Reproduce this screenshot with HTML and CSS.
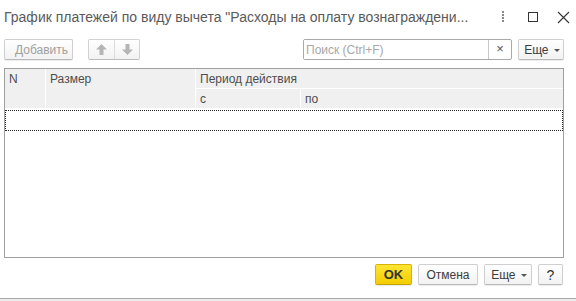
FILE: index.html
```html
<!DOCTYPE html>
<html lang="ru">
<head>
    <meta charset="UTF-8">
    <title>График платежей</title>
    <link rel="stylesheet" href="styles.css">
</head>
<body>
    <div class="window">
        <div class="titlebar">
            <h1 class="title">График платежей по виду вычета "Расходы на оплату вознаграждени...</h1>
            <div class="win-controls">
                <span class="win-btn">
                    <svg width="4" height="14" viewBox="0 0 4 14">
                        <rect x="1" y="1" width="2" height="2" fill="#8a8a8a"/>
                        <rect x="1" y="4" width="2" height="2" fill="#8a8a8a"/>
                        <rect x="1" y="7" width="2" height="2" fill="#8a8a8a"/>
                        <rect x="1" y="10" width="2" height="2" fill="#8a8a8a"/>
                    </svg>
                </span>
                <span class="win-btn">
                    <svg width="12" height="12" viewBox="0 0 12 12">
                        <rect x="1.5" y="1.5" width="9" height="9" fill="none" stroke="#333" stroke-width="1"/>
                    </svg>
                </span>
                <span class="win-btn">
                    <svg width="13" height="13" viewBox="0 0 13 13">
                        <path d="M1 1 L12 12 M12 1 L1 12" stroke="#333" stroke-width="1.1"/>
                    </svg>
                </span>
            </div>
        </div>

        <div class="toolbar">
            <button class="btn btn-add" disabled>Добавить</button>
            <div class="btn-group">
                <button class="btn-arrow" disabled>
                    <svg width="11" height="11" viewBox="0 0 11 11">
                        <path d="M5.5 0 L11 5.5 L7.5 5.5 L7.5 11 L3.5 11 L3.5 5.5 L0 5.5 Z" fill="#b5b5b5"/>
                    </svg>
                </button>
                <button class="btn-arrow" disabled>
                    <svg width="11" height="11" viewBox="0 0 11 11">
                        <path d="M5.5 11 L11 5.5 L7.5 5.5 L7.5 0 L3.5 0 L3.5 5.5 L0 5.5 Z" fill="#b5b5b5"/>
                    </svg>
                </button>
            </div>
            <div class="spacer"></div>
            <div class="search">
                <input class="search-input" type="text" placeholder="Поиск (Ctrl+F)">
                <span class="search-clear">×</span>
            </div>
            <button class="btn btn-more">Еще <span class="caret"></span></button>
        </div>

        <div class="grid">
            <div class="grid-head">
                <div class="cell cell-n">N</div>
                <div class="cell cell-size">Размер</div>
                <div class="cell cell-period">Период действия</div>
                <div class="cell cell-from">с</div>
                <div class="cell cell-to">по</div>
            </div>
            <div class="grid-row current"></div>
        </div>

        <div class="form-buttons">
            <button class="btn btn-ok">OK</button>
            <button class="btn btn-cancel">Отмена</button>
            <button class="btn btn-more">Еще <span class="caret"></span></button>
            <button class="btn btn-help">?</button>
        </div>

        <div class="statusbar"></div>
    </div>
</body>
</html>
```

FILE: styles.css
```css
body {
    margin: 0;
    font-family: "Liberation Sans", Arial, sans-serif;
    font-size: 12px;
    color: #4a4a4a;
    background: #fff;
}
.window {
    width: 576px;
    height: 301px;
    display: flex;
    flex-direction: column;
    overflow: hidden;
}
.titlebar {
    display: flex;
    align-items: flex-start;
    height: 39px;
    padding-left: 4px;
    padding-right: 3px;
}
.title {
    margin: 9px 0 0 0;
    font-size: 14px;
    font-weight: normal;
    line-height: 17px;
    color: #5a5a5a;
    white-space: nowrap;
    overflow: hidden;
    flex: 1;
    min-width: 0;
}
.win-controls {
    display: flex;
    align-items: center;
    gap: 10px;
    margin-top: 9px;
}
.win-btn {
    display: flex;
    align-items: center;
    justify-content: center;
    width: 20px;
    height: 16px;
}

/* панель команд */
.toolbar {
    display: flex;
    align-items: center;
    height: 21px;
    padding: 0 12px 0 4px;
}
.btn {
    height: 21px;
    padding: 0 10px;
    font-family: "Liberation Sans", Arial, sans-serif;
    font-size: 12px;
    color: #3c3c3c;
    background: linear-gradient(to bottom, #ffffff, #f2f2f2);
    border: 1px solid #cfcfcf;
    border-bottom-color: #b9b9b9;
    border-radius: 2px;
    box-shadow: 0 1px 1px rgba(0, 0, 0, 0.08);
    cursor: pointer;
}
.btn-add {
    width: 69px;
    color: #a0a0a0;
}
.btn-group {
    display: flex;
    margin-left: 15px;
    border: 1px solid #d2d2d2;
    border-bottom-color: #bdbdbd;
    border-radius: 2px;
    background: linear-gradient(to bottom, #ffffff, #f2f2f2);
}
.btn-arrow {
    width: 25px;
    height: 19px;
    padding: 0;
    border: none;
    background: none;
    display: flex;
    align-items: center;
    justify-content: center;
}
.btn-arrow + .btn-arrow {
    border-left: 1px solid #dcdcdc;
}
.spacer {
    flex: 1;
}
.search {
    display: flex;
    width: 207px;
    height: 19px;
    border: 1px solid #a9a9a9;
    border-radius: 2px;
    background: #fff;
}
.search-input {
    flex: 1;
    min-width: 0;
    border: none;
    outline: none;
    padding: 0 2px;
    font-family: "Liberation Sans", Arial, sans-serif;
    font-size: 12px;
    color: #333;
}
.search-input::placeholder {
    color: #a8a8a8;
}
.search-clear {
    width: 22px;
    border-left: 1px solid #c8c8c8;
    text-align: center;
    line-height: 18px;
    font-size: 13px;
    color: #555;
}
.btn-more {
    width: 46px;
    margin-left: 6px;
    padding: 0 0 0 2px;
}
.caret {
    display: inline-block;
    margin-left: 2px;
    vertical-align: middle;
    border-left: 3px solid transparent;
    border-right: 3px solid transparent;
    border-top: 3px solid #555;
}

/* таблица */
.grid {
    margin: 8px 12px 0 4px;
    height: 188px;
    border: 1px solid #a0a0a0;
    background: #fff;
}
.grid-head {
    display: grid;
    grid-template-columns: 41px 150px 105px 1fr;
    grid-template-rows: 20px 20px;
    background: #f0f0f0;
}
.cell {
    padding: 3px 4px 0 4px;
    color: #4d4d4d;
    white-space: nowrap;
    border-right: 1px solid #fff;
    border-bottom: 1px solid #fff;
}
.cell-n {
    grid-row: 1 / 3;
}
.cell-size {
    grid-row: 1 / 3;
}
.cell-period {
    grid-column: 3 / 5;
    border-right: none;
}
.cell-to {
    border-right: none;
}
.grid-row {
    height: 19px;
    margin-top: 1px;
}
.grid-row.current {
    border: 1px dotted #222;
}

/* кнопки формы */
.form-buttons {
    display: flex;
    justify-content: flex-end;
    gap: 6px;
    margin-top: 6px;
    padding-right: 13px;
}
.btn-ok {
    width: 37px;
    padding: 0;
    font-size: 13px;
    font-weight: bold;
    color: #333;
    background: linear-gradient(to bottom, #ffe533, #f2cd00);
    border-color: #d8b400;
    border-bottom-color: #c4a200;
}
.btn-cancel {
    width: 60px;
    padding: 0;
}
.form-buttons .btn-more {
    width: 48px;
    margin-left: 0;
}
.btn-help {
    width: 25px;
    padding: 0;
    font-size: 14px;
    color: #333;
}
.statusbar {
    margin-top: auto;
    height: 2px;
    border-top: 1px solid #a8a8a8;
    background: #ececec;
}
```
